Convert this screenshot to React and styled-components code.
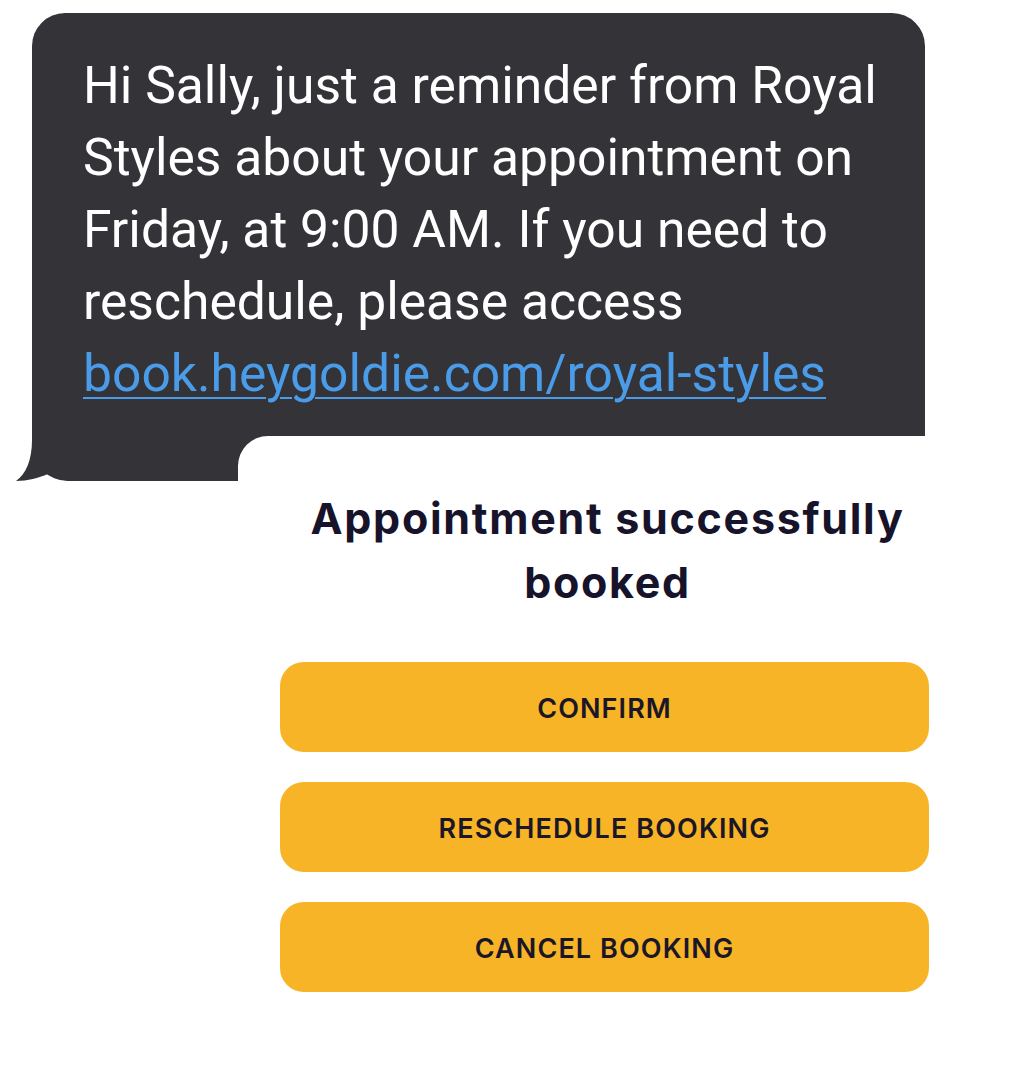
import React from "react";
import styled, { createGlobalStyle } from "styled-components";

const Global = createGlobalStyle`
  html, body { margin: 0; padding: 0; background: #ffffff; }
  #root { width: 1018px; min-height: 1070px; background: #ffffff; }
`;

const Page = styled.div`
  width: 1018px;
  min-height: 1070px;
  box-sizing: border-box;
  padding: 13px 0 0 32px;
  display: flex;
  flex-direction: column;
`;

const Bubble = styled.div`
  position: relative;
  width: 893px;
  box-sizing: border-box;
  padding: 37px 30px 71px 51px;
  background: #333338;
  border-radius: 33px 33px 0 36px;
  color: #ffffff;
  font-family: Roboto, "Liberation Sans", sans-serif;
  font-size: 51.6px;
  line-height: 72px;
  font-weight: 400;
  white-space: nowrap;
`;

const Tail = styled.svg`
  position: absolute;
  left: -16px;
  bottom: 0;
  width: 60px;
  height: 52px;
  display: block;
`;

const Link = styled.a`
  color: #4a9be8;
  text-decoration: underline;
  text-decoration-thickness: 2px;
  text-underline-offset: 6px;
`;

const Card = styled.div`
  position: relative;
  z-index: 1;
  margin: -45px 0 0 206px;
  width: 733px;
  box-sizing: border-box;
  padding: 50px 42px 60px;
  background: #ffffff;
  border-top-left-radius: 30px;
  display: flex;
  flex-direction: column;
  align-items: stretch;
`;

const Title = styled.h1`
  margin: 0 0 48px;
  text-align: center;
  font-family: Inter, "Liberation Sans", sans-serif;
  font-weight: 700;
  font-size: 43px;
  line-height: 64px;
  color: #16132b;
  letter-spacing: 1.7px;
  padding-left: 6px;
`;

const Actions = styled.div`
  display: flex;
  flex-direction: column;
  gap: 30px;
`;

const ActionButton = styled.button`
  height: 90px;
  border: none;
  border-radius: 24px;
  background: #f7b426;
  color: #1b1728;
  font-family: Inter, "Liberation Sans", sans-serif;
  font-weight: 600;
  font-size: 27px;
  letter-spacing: 1.1px;
  text-transform: uppercase;
  cursor: pointer;
  padding: 2px 0 0;
`;

export default function App() {
  return (
    <>
      <Global />
      <Page>
        <Bubble>
          Hi Sally, just a reminder from Royal
          <br />
          Styles about your appointment on
          <br />
          Friday, at 9:00 AM. If you need to
          <br />
          reschedule, please access
          <br />
          <Link href="#">book.heygoldie.com/royal-styles</Link>
          <Tail viewBox="0 0 60 52" aria-hidden="true">
            <path
              d="M16 0 L16 11 C16 31 10 45 0 52 C12 52 22 49 32 45 C40 50 48 52 60 52 L60 0 Z"
              fill="#333338"
            />
          </Tail>
        </Bubble>
        <Card>
          <Title>
            Appointment successfully
            <br />
            booked
          </Title>
          <Actions>
            <ActionButton>Confirm</ActionButton>
            <ActionButton>Reschedule Booking</ActionButton>
            <ActionButton>Cancel Booking</ActionButton>
          </Actions>
        </Card>
      </Page>
    </>
  );
}
